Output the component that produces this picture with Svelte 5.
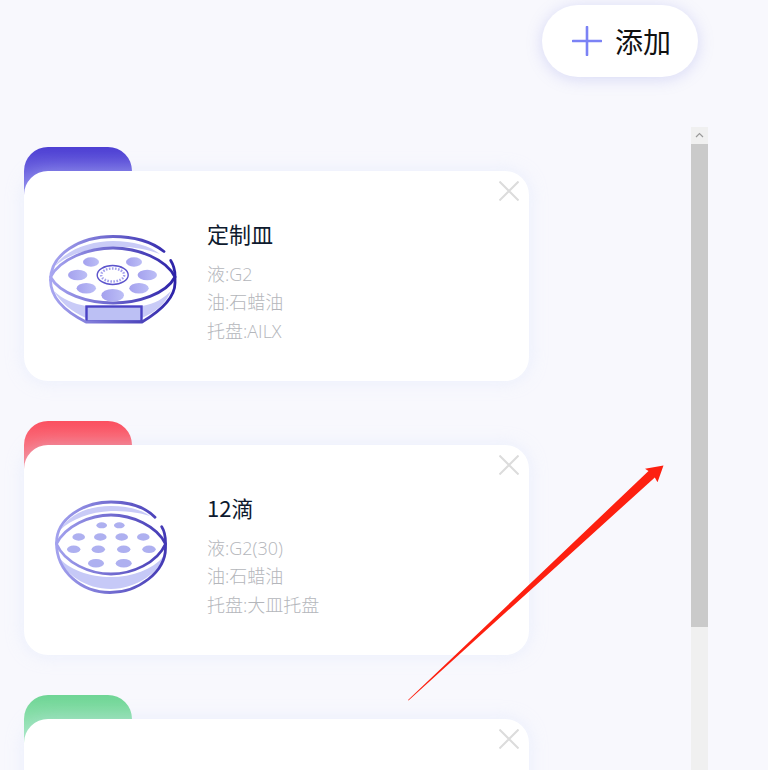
<script>
  const plates = [
    { id: 1, tone: 'purple', icon: 'custom', name: '定制皿', liquid: 'G2', oil: '石蜡油', tray: 'AILX' },
    { id: 2, tone: 'red', icon: 'drops', name: '12滴', liquid: 'G2(30)', oil: '石蜡油', tray: '大皿托盘' },
    { id: 3, tone: 'green', icon: null, name: '', liquid: '', oil: '', tray: '' }
  ]

  // wells on the custom plate: cx, cy, rx, ry
  const customWells = [
    [91, 262, 8, 4.7], [134, 262, 8, 4.7],
    [77.7, 275, 9.7, 5.3], [147.3, 275, 9.7, 5.3],
    [86.3, 288.3, 9.7, 5.3], [139, 288.3, 9.7, 5.3],
    [112.7, 295.3, 11.3, 6.3]
  ]

  const dropWells = [
    [101.7, 525.3, 5.3, 3], [119.3, 525.3, 5.3, 3],
    [78.7, 537, 6.3, 3.7], [100.3, 537, 6.3, 3.7], [121.7, 537, 6.3, 3.7], [143.3, 537, 6.3, 3.7],
    [73.7, 549.3, 6.7, 3.7], [98.3, 549.3, 6.7, 3.7], [123.7, 549.3, 6.7, 3.7], [149, 549.3, 6.7, 3.7],
    [96, 563.3, 8, 4.3], [123.7, 563.3, 8, 4.3]
  ]
</script>

<div class="page">
  <div class="toolbar">
    <button class="add-btn">
      <svg class="plus" viewBox="0 0 30 30" width="30" height="30">
        <path d="M15 1V29M1 15H29" stroke="#7b82f5" stroke-width="2.6" stroke-linecap="round" fill="none" />
      </svg>
      <span>添加</span>
    </button>
  </div>

  <div class="content">
    <div class="list">
      {#each plates as plate (plate.id)}
        <div class="item">
          <div class="tab {plate.tone}"></div>
          <div class="card">
            <svg class="close" viewBox="0 0 20 20" width="20" height="20">
              <path d="M0.5 0.5L19.5 19.5M19.5 0.5L0.5 19.5" stroke="#dcdcdc" stroke-width="2" fill="none" />
            </svg>

            {#if plate.icon === 'custom'}
              <svg class="icon" viewBox="44 221 136 110" width="136" height="110">
                <defs>
                  <linearGradient id="line-a" gradientUnits="userSpaceOnUse" x1="50" y1="0" x2="175" y2="0">
                    <stop offset="0" stop-color="#a9a7f1" />
                    <stop offset="1" stop-color="#2c22a8" />
                  </linearGradient>
                  <linearGradient id="well-a" x1="0" y1="0" x2="1" y2="0">
                    <stop offset="0" stop-color="#a4a1ee" />
                    <stop offset="1" stop-color="#bcbef6" />
                  </linearGradient>
                </defs>
                <path d="M55 266C66 249 92 241 113 241C133 241 150 246 160 254C146 249 130 246 113 247C90 248 68 254 55 266Z" fill="#c9cbf7" />
                <path d="M54 291C62 299 74 304 86 306V318C72 312 60 302 54 291ZM142 318V306C155 304 164 298 171 291C166 303 156 312 142 318Z" fill="#c9cbf7" />
                <rect x="86.500" y="306.500" width="55" height="15" fill="#bcc0f4" stroke="#4a42c4" stroke-width="2.400" />
                <path d="M50.500 277C60 259 88 248 113 248C138 248 166 259 175 277C166 294 138 303 113 303C88 303 60 294 50.500 277Z" fill="none" stroke="url(#line-a)" stroke-width="2.800" stroke-linejoin="round" />
                <path d="M50.500 280C50.500 254 80 236.500 113 236.500C134 236.500 152 242 164 251.500" fill="none" stroke="url(#line-a)" stroke-width="2.800" stroke-linecap="round" />
                <path d="M170.700 260.500C173.500 265 175 270 175 276V283C175 296 162 310 142 322H86C66 312 50.500 298 50.500 280" fill="none" stroke="url(#line-a)" stroke-width="2.800" stroke-linecap="round" stroke-linejoin="round" />
                {#each customWells as w}
                  <ellipse cx={w[0]} cy={w[1]} rx={w[2]} ry={w[3]} fill="url(#well-a)" />
                {/each}
                <ellipse cx="112.700" cy="275" rx="15.500" ry="9.500" fill="#fff" stroke="#5c54cc" stroke-width="1.400" />
                <ellipse cx="112.700" cy="275" rx="11.500" ry="6.500" fill="none" stroke="#a4a1ee" stroke-width="2.400" stroke-dasharray="1.600 1.400" />
              </svg>
            {:else if plate.icon === 'drops'}
              <svg class="icon" viewBox="44 495 136 110" width="136" height="110">
                <defs>
                  <linearGradient id="line-b" gradientUnits="userSpaceOnUse" x1="56" y1="0" x2="166" y2="0">
                    <stop offset="0" stop-color="#a3a2ee" />
                    <stop offset="1" stop-color="#4238b4" />
                  </linearGradient>
                </defs>
                <path d="M60 530C70 513 90 506 111 506C128 506 142 510 150 516C138 512 124 511 111 511C90 512 72 519 60 530Z" fill="#c9cbf7" />
                <path d="M58 556C68 570 90 577 111 577C132 577 152 570 164 556C160 572 136 589 111 589C86 589 64 574 58 556Z" fill="#c6c9f7" />
                <path d="M56.500 544C65 526 90 515 111 515C132 515 157 526 165.500 544C157 563 132 574 111 574C90 574 65 563 56.500 544Z" fill="none" stroke="url(#line-b)" stroke-width="2.800" stroke-linejoin="round" />
                <path d="M56.500 543C56.500 518 84 502 111 502C129 502 145 507 155 517.300" fill="none" stroke="url(#line-b)" stroke-width="2.800" stroke-linecap="round" />
                <path d="M161.700 526.700C164.500 531 165.500 537 165.500 543V548C165.500 572 138 592.500 110 592.500C82 592.500 56.500 572 56.500 543" fill="none" stroke="url(#line-b)" stroke-width="2.800" stroke-linecap="round" />
                {#each dropWells as w}
                  <ellipse cx={w[0]} cy={w[1]} rx={w[2]} ry={w[3]} fill="#aeb0f0" />
                {/each}
              </svg>
            {/if}

            {#if plate.name}
              <div class="info">
                <div class="name">{plate.name}</div>
                <div class="detail">液:{plate.liquid}</div>
                <div class="detail">油:{plate.oil}</div>
                <div class="detail">托盘:{plate.tray}</div>
              </div>
            {/if}
          </div>
        </div>
      {/each}
    </div>

    <div class="scrollbar">
      <div class="scroll-up">
        <svg viewBox="0 0 17 17" width="17" height="17">
          <path d="M5 10L8.500 6.500L12 10" stroke="#9a9a9a" stroke-width="1.200" fill="none" />
        </svg>
      </div>
      <div class="thumb"></div>
    </div>
  </div>

  <!-- red annotation arrow on top of the page -->
  <svg class="arrow" viewBox="0 0 768 770" width="768" height="770">
    <polygon points="408,700 648.500,471 645,468.800 663.500,465.500 657.500,482.300 654.800,477.500 408.500,700.500" fill="#fd2010" />
  </svg>
</div>

<style>
  :global(body) {
    margin: 0;
    background: #f8f8fd;
    font-family: "Noto Sans CJK SC", "Open Sans", sans-serif;
  }

  .page {
    position: relative;
    width: 768px;
    height: 770px;
    overflow: hidden;
    background: #f8f8fd;
  }

  .toolbar {
    display: flex;
    justify-content: flex-end;
    height: 122px;
    padding: 5px 70px 0 0;
  }

  .add-btn {
    display: flex;
    align-items: center;
    gap: 13px;
    box-sizing: border-box;
    width: 156px;
    height: 72px;
    padding: 0 0 0 30px;
    border: none;
    border-radius: 36px;
    background: #fff;
    box-shadow: 0 2px 16px rgba(130, 135, 225, 0.28);
    color: #111;
    font-family: inherit;
    font-size: 28px;
    cursor: pointer;
  }

  .plus {
    flex: none;
  }

  .content {
    display: flex;
    align-items: flex-start;
    height: 643px;
    overflow: hidden;
  }

  .list {
    flex: none;
    width: 505px;
    margin-left: 24px;
    padding-top: 20px;
  }

  .item {
    margin-bottom: 40px;
  }

  .tab {
    width: 108px;
    height: 54px;
    margin-bottom: -30px;
    border-radius: 24px 24px 0 0;
  }

  .tab.purple {
    background: linear-gradient(180deg, #4d3fd3 0%, #7d76e6 70%);
  }

  .tab.red {
    background: linear-gradient(180deg, #fb5060 0%, #f9808c 70%);
  }

  .tab.green {
    background: linear-gradient(180deg, #6fd595 0%, #9be6b8 70%);
  }

  .card {
    position: relative;
    display: flex;
    align-items: center;
    box-sizing: border-box;
    height: 210px;
    padding-left: 20px;
    border-radius: 24px;
    background: #fff;
    box-shadow: 0 0 18px rgba(205, 222, 252, 0.35);
  }

  .close {
    position: absolute;
    top: 10px;
    right: 10px;
  }

  .icon {
    flex: none;
  }

  .info {
    margin-left: 28px;
    margin-top: 10px;
  }

  .name {
    margin-bottom: 10px;
    color: #0e1a2e;
    font-size: 22px;
    line-height: 33px;
    margin-left: -1px;
  }

  .detail {
    color: #b4b6bb;
    font-family: "Open Sans", "Noto Sans CJK SC", sans-serif;
    font-size: 18px;
    font-weight: 300;
    line-height: 28.500px;
    margin-left: -1px;
  }

  .scrollbar {
    flex: none;
    width: 17px;
    height: 643px;
    margin-left: 162px;
    background: #f0f0f0;
  }

  .scroll-up {
    height: 17px;
  }

  .scroll-up svg {
    display: block;
  }

  .thumb {
    height: 483px;
    background: #cacaca;
  }

  .arrow {
    position: absolute;
    top: 0;
    left: 0;
    pointer-events: none;
  }
</style>
